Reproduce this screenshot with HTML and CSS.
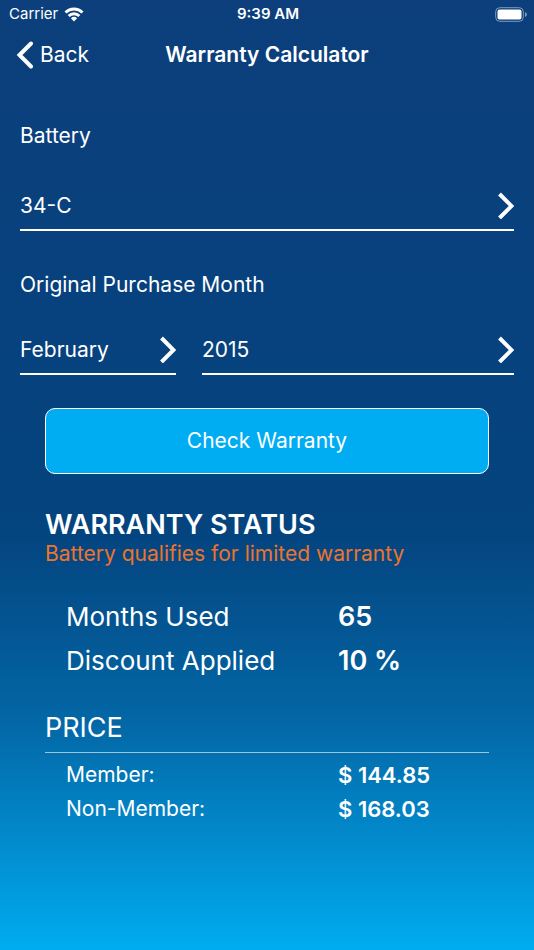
FILE: index.html
```html
<!DOCTYPE html>
<html lang="en">
<head>
    <meta charset="UTF-8">
    <meta name="viewport" content="width=device-width, initial-scale=1.0">
    <title>Warranty Calculator</title>
    <link rel="stylesheet" href="styles.css">
</head>
<body>

    <div class="status-bar">
        <span class="carrier">Carrier
            <svg class="wifi" viewBox="0 0 20 15" aria-hidden="true">
                <path d="M0.5 4.5 A13.5 13.5 0 0 1 19.5 4.5 L17.5 6.6 A10.8 10.8 0 0 0 2.5 6.6 Z"/>
                <path d="M3.7 7.9 A8.9 8.9 0 0 1 16.3 7.9 L14.3 9.9 A6.2 6.2 0 0 0 5.7 9.9 Z"/>
                <path d="M6.9 11.2 A4.5 4.5 0 0 1 13.1 11.2 L10 14.4 Z"/>
            </svg>
        </span>
        <span class="time">9:39 AM</span>
        <svg class="battery" viewBox="0 0 32 15" aria-hidden="true">
            <rect class="battery-case" x="0.7" y="0.7" width="27.6" height="13.6" rx="4"/>
            <rect x="2.5" y="2.5" width="24" height="10" rx="2"/>
            <path class="battery-tip" d="M30 5 Q32 5.8 32 7.5 Q32 9.2 30 10 Z"/>
        </svg>
    </div>

    <header class="nav">
        <button class="back" type="button">
            <svg class="back-icon" viewBox="0 0 18 28" aria-hidden="true"><path d="M15 2.5 L3.5 14 L15 25.5"/></svg>
            Back
        </button>
        <h1>Warranty Calculator</h1>
    </header>

    <main>
        <p class="label" id="battery-label">Battery</p>
        <button class="picker" type="button" aria-labelledby="battery-label battery-value">
            <span id="battery-value">34-C</span>
            <svg class="chevron" viewBox="0 0 16 28" aria-hidden="true"><path d="M1.5 3 L13.5 15 L1.5 27"/></svg>
        </button>

        <p class="label label-date" id="date-label">Original Purchase Month</p>
        <div class="date-row">
            <button class="picker" type="button" aria-labelledby="date-label month-value">
                <span id="month-value">February</span>
                <svg class="chevron" viewBox="0 0 16 28" aria-hidden="true"><path d="M1.5 3 L13.5 15 L1.5 27"/></svg>
            </button>
            <button class="picker" type="button" aria-labelledby="date-label year-value">
                <span id="year-value">2015</span>
                <svg class="chevron" viewBox="0 0 16 28" aria-hidden="true"><path d="M1.5 3 L13.5 15 L1.5 27"/></svg>
            </button>
        </div>

        <div class="content">
            <button class="check" type="button">Check Warranty</button>

            <h2>WARRANTY STATUS</h2>
            <p class="message">Battery qualifies for limited warranty</p>

            <table class="usage">
                <tr><th scope="row">Months Used</th><td>65</td></tr>
                <tr><th scope="row">Discount Applied</th><td>10 %</td></tr>
            </table>

            <h3>PRICE</h3>
            <table class="prices">
                <tr><th scope="row">Member:</th><td>$ 144.85</td></tr>
                <tr><th scope="row">Non-Member:</th><td>$ 168.03</td></tr>
            </table>
        </div>
    </main>

</body>
</html>
```

FILE: styles.css
```css
* {
    box-sizing: border-box;
}
body {
    margin: 0;
    min-height: 100vh;
    color: white;
    font-family: Inter, "Liberation Sans", sans-serif;
    font-size: 21px;
    line-height: 28px;
    background: linear-gradient(#0c3f7c 0%, #04447f 56%, #0367a6 76%, #00acf0 100%);
}
h1, h2, h3, p {
    margin: 0;
}
button {
    padding: 0;
    border: 0;
    background: none;
    color: inherit;
    font: inherit;
    cursor: pointer;
}
svg {
    fill: white;
}
.status-bar {
    display: grid;
    grid-template-columns: 1fr auto 1fr;
    align-items: center;
    height: 27px;
    padding: 0 7px 0 9px;
    font-size: 15px;
}
.carrier {
    display: flex;
    align-items: center;
    gap: 6px;
}
.wifi {
    width: 20px;
    height: 15px;
}
.time {
    font-weight: 600;
}
.battery {
    width: 32px;
    height: 15px;
    justify-self: end;
}
.battery-case {
    fill: none;
    stroke: #7f9bbd;
}
.battery-tip {
    fill: #7f9bbd;
}
.nav {
    display: grid;
    grid-template-columns: 1fr auto 1fr;
    align-items: center;
    height: 56px;
    padding: 0 16px;
}
.back {
    display: flex;
    align-items: center;
    justify-self: start;
    gap: 6px;
}
.back-icon {
    width: 18px;
    height: 28px;
}
.back-icon path, .chevron path {
    fill: none;
    stroke: white;
    stroke-width: 4;
}
.back-icon path {
    stroke-linecap: round;
}
h1 {
    font-size: 21px;
    font-weight: 600;
}
main {
    padding: 39px 20px 0;
}
.picker {
    display: flex;
    align-items: center;
    justify-content: space-between;
    width: 100%;
    height: 50px;
    border-bottom: 2px solid white;
}
.picker span {
    padding-top: 2px;
}
.label {
    margin-bottom: 31px;
}
.label-date {
    margin: 40px 0 26px;
}
.chevron {
    width: 16px;
    height: 28px;
}
.date-row {
    display: grid;
    grid-template-columns: 1fr 2fr;
    gap: 26px;
}
.content {
    padding: 33px 25px 0;
}
.check {
    width: 100%;
    height: 66px;
    border: 1px solid white;
    border-radius: 10px;
    background: #00adf2;
}
h2 {
    margin-top: 36px;
    font-size: 27px;
    font-weight: 600;
    line-height: 30px;
}
.message {
    color: #ee732b;
}
table {
    width: 100%;
    border-collapse: collapse;
    table-layout: fixed;
}
th, td {
    padding: 0;
    text-align: left;
}
th {
    width: 66%;
    padding-left: 21px;
    font-weight: 400;
}
td {
    font-weight: 600;
}
.usage {
    margin-top: 27px;
    font-size: 26px;
    line-height: 44px;
}
.usage td {
    font-size: 27px;
}
h3 {
    margin-top: 28px;
    padding-bottom: 7px;
    border-bottom: 1px solid #9cc4df;
    font-size: 27px;
    font-weight: 400;
    line-height: 34px;
}
.prices {
    margin-top: 5px;
    line-height: 34px;
}
.prices td {
    font-size: 22px;
}
```
